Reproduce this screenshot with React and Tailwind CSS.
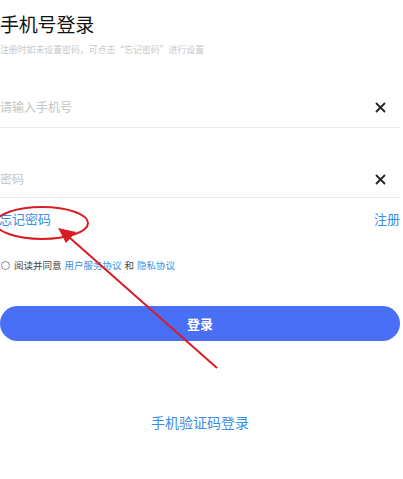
import React from "react";

const font = { fontFamily: '"Noto Sans CJK SC", "Noto Sans", sans-serif' };

function ClearIcon() {
  return (
    <svg width="11" height="11" viewBox="0 0 11 11" className="shrink-0">
      <path d="M1.5 1.5 L9.5 9.5 M9.5 1.5 L1.5 9.5" stroke="#222" strokeWidth="1.8" strokeLinecap="round" />
    </svg>
  );
}

function InputRow({ placeholder, className }) {
  return (
    <div className={"flex items-center justify-between border-b border-[#ececec] w-[400px] " + className}>
      <span className="text-[12px] text-[#c4c4c4] leading-none">{placeholder}</span>
      <div className="mr-[14px]">
        <ClearIcon />
      </div>
    </div>
  );
}

export default function App() {
  return (
    <div className="relative w-[403px] h-[479px] bg-white overflow-hidden" style={font}>
      <div className="flex flex-col">
        <h1 className="mt-[12px] text-[19px] leading-[24px] text-[#111] tracking-[-0.2px]">手机号登录</h1>
        <p className="mt-[8px] text-[8.9px] leading-[12px] text-[#c8c8c8]">
          注册时如未设置密码，可点击“忘记密码”进行设置
        </p>

        <InputRow placeholder="请输入手机号" className="mt-[45px] pb-[14px]" />
        <InputRow placeholder="密码" className="mt-[45px] pb-[12px]" />

        <div className="mt-[13px] flex justify-between w-[400px]">
          <span className="ml-[-1px] text-[13px] leading-[16px] text-[#3a8ee6]">忘记密码</span>
          <span className="text-[13px] leading-[16px] text-[#3a8ee6]">注册</span>
        </div>

        <div className="mt-[31px] flex items-center text-[9.5px] leading-[14px]">
          <span className="ml-[1px] w-[9px] h-[9px] rounded-full border border-[#8a8a8a]" />
          <span className="ml-[4px] text-[#444]">阅读并同意</span>
          <span className="ml-[3px] text-[#3a8ee6]">用户服务协议</span>
          <span className="ml-[3px] text-[#444]">和</span>
          <span className="ml-[3px] text-[#3a8ee6]">隐私协议</span>
        </div>

        <button className="mt-[34px] w-[400px] h-[35px] rounded-full bg-[#4a6ff7] text-white text-[13px] font-bold">
          登录
        </button>

        <div className="mt-[72px] w-[400px] text-center text-[14px] leading-[18px] text-[#3a8ee6]">
          手机验证码登录
        </div>
      </div>

      {/* red annotation */}
      <svg className="absolute left-0 top-0 pointer-events-none" width="403" height="479">
        <ellipse cx="42" cy="223" rx="46" ry="16" fill="none" stroke="#d91c22" strokeWidth="2" />
        <line x1="217" y1="368" x2="70" y2="238" stroke="#d91c22" strokeWidth="2" />
        <polygon points="58,228 76,232 66,243" fill="#d91c22" />
      </svg>
    </div>
  );
}
